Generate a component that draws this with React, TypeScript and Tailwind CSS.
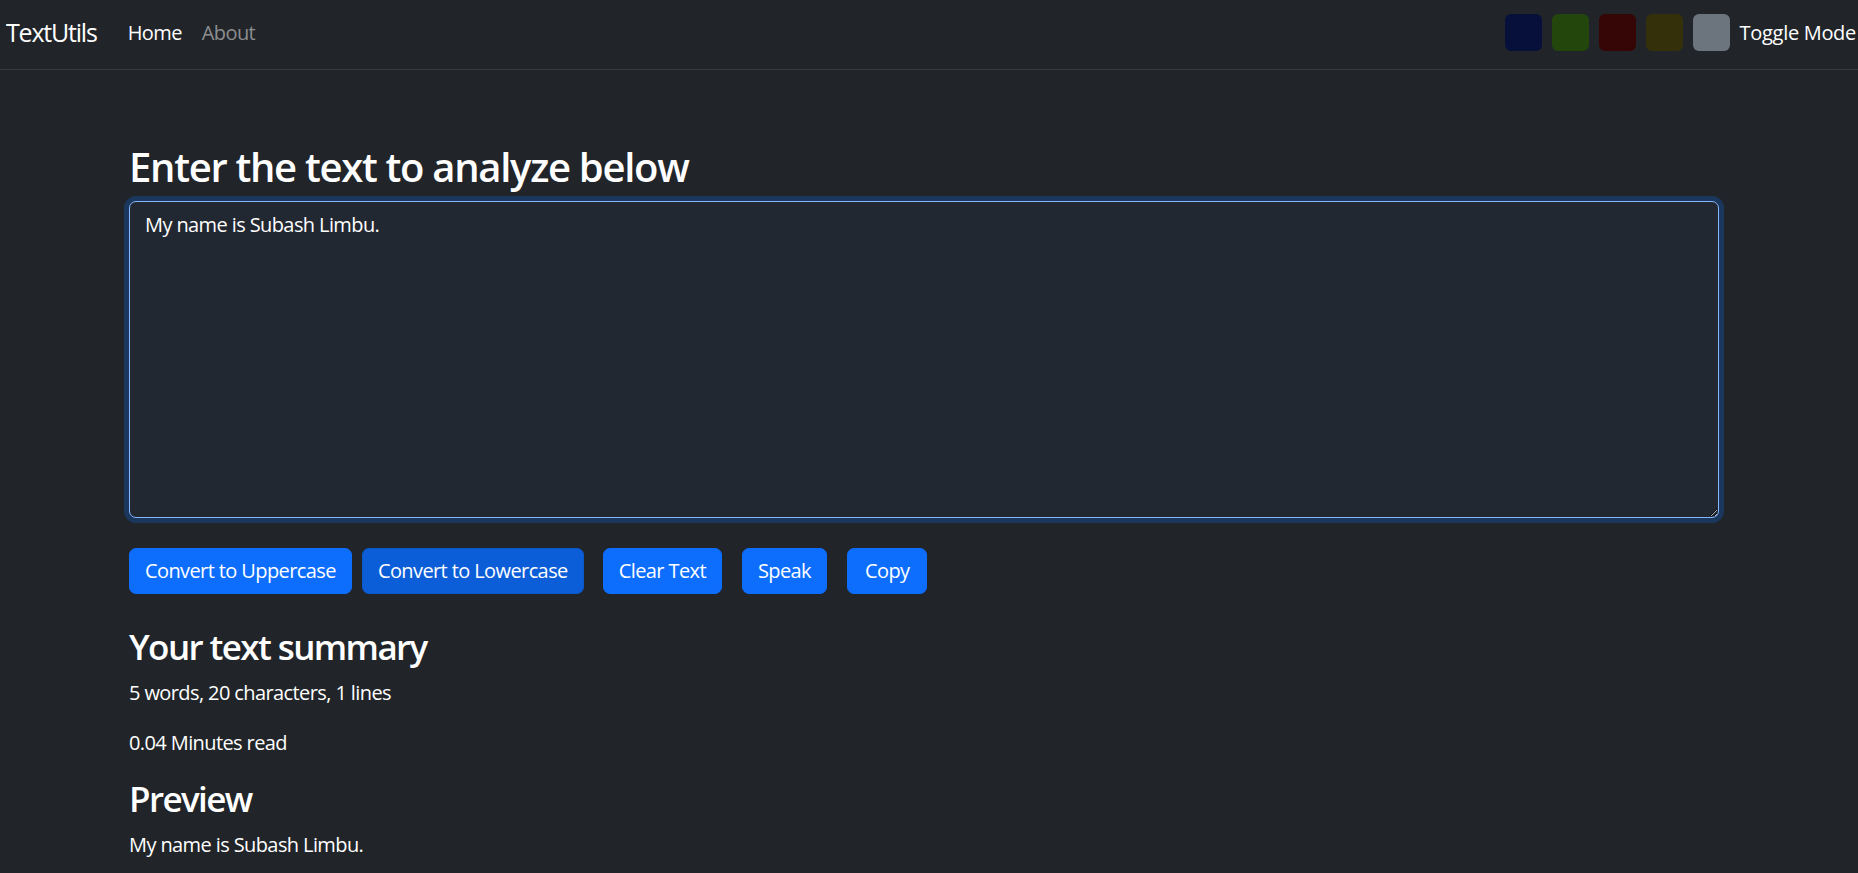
import React, { useState } from "react";

const swatches = ["#06103a", "#23460d", "#360606", "#34310a", "#6c757d"];

const Navbar = () => {
  return (
    <nav className="flex h-[70px] items-center justify-between border-b border-[#373b3e] pb-[4px] pl-[6px] pr-[2px]">
      <div className="flex items-center">
        <a href="#" className="text-[25px] leading-[37.5px] tracking-[-1.2px] text-white">
          TextUtils
        </a>
        <ul className="ml-[21px] flex">
          <li>
            <a href="#" className="px-[10px] text-[20px] leading-[30px] text-white">
              Home
            </a>
          </li>
          <li>
            <a href="#" className="px-[10px] text-[20px] leading-[30px] text-[#8c8e90]">
              About
            </a>
          </li>
        </ul>
      </div>
      <div className="flex items-center gap-[10px]">
        {swatches.map((c) => (
          <div
            key={c}
            className="h-[37px] w-[37px] rounded-[6px]"
            style={{ backgroundColor: c }}
          ></div>
        ))}
        <span className="text-[20px] leading-[30px] tracking-[-0.3px] text-white">
          Toggle Mode
        </span>
      </div>
    </nav>
  );
};

export default function App() {
  const [text] = useState("My name is Subash Limbu.");

  return (
    <div className="min-h-screen bg-[#212529] font-['Open_Sans',sans-serif] tracking-[-0.6px] text-white">
      <Navbar />
      <div className="ml-[129px] w-[1590px] pt-[73px]">
        <h2 className="mb-[10px] text-[40px] font-semibold leading-[48px] tracking-[-1.3px]">
          Enter the text to analyze below
        </h2>
        <textarea
          defaultValue={text}
          className="block h-[317px] w-full resize-y rounded-[7px] border border-[#86b7fe] bg-[#222832] px-[15px] py-[7.5px] text-[20px] leading-[30px] tracking-[-0.6px] text-white shadow-[0_0_0_5px_rgba(13,110,253,0.25)] outline-none"
        ></textarea>
        <div className="mt-[30px] flex">
          <button className="rounded-[7px] border border-[#0d6efd] bg-[#0d6efd] px-[15px] py-[7px] text-[20px] leading-[30px] text-white">
            Convert to Uppercase
          </button>
          <button className="ml-[10px] rounded-[7px] border border-[#0a58ca] bg-[#0b5ed7] px-[15px] py-[7px] text-[20px] leading-[30px] text-white">
            Convert to Lowercase
          </button>
          <button className="ml-[19px] rounded-[7px] border border-[#0d6efd] bg-[#0d6efd] px-[15px] py-[7px] text-[20px] leading-[30px] text-white">
            Clear Text
          </button>
          <button className="ml-[20px] rounded-[7px] border border-[#0d6efd] bg-[#0d6efd] px-[15px] py-[7px] text-[20px] leading-[30px] text-white">
            Speak
          </button>
          <button className="ml-[20px] rounded-[7px] border border-[#0d6efd] bg-[#0d6efd] px-[17px] py-[7px] text-[20px] leading-[30px] text-white">
            Copy
          </button>
        </div>
        <div className="mt-[32px]">
          <h3 className="mb-[10px] text-[35px] font-semibold leading-[42px] tracking-[-1.6px]">
            Your text summary
          </h3>
          <p className="mb-[20px] text-[20px] leading-[30px]">
            5 words, 20 characters, 1 lines
          </p>
          <p className="mb-[20px] text-[20px] leading-[30px]">0.04 Minutes read</p>
          <h3 className="mb-[10px] text-[35px] font-semibold leading-[42px] tracking-[-1.6px]">
            Preview
          </h3>
          <p className="text-[20px] leading-[30px]">{text}</p>
        </div>
      </div>
    </div>
  );
}
